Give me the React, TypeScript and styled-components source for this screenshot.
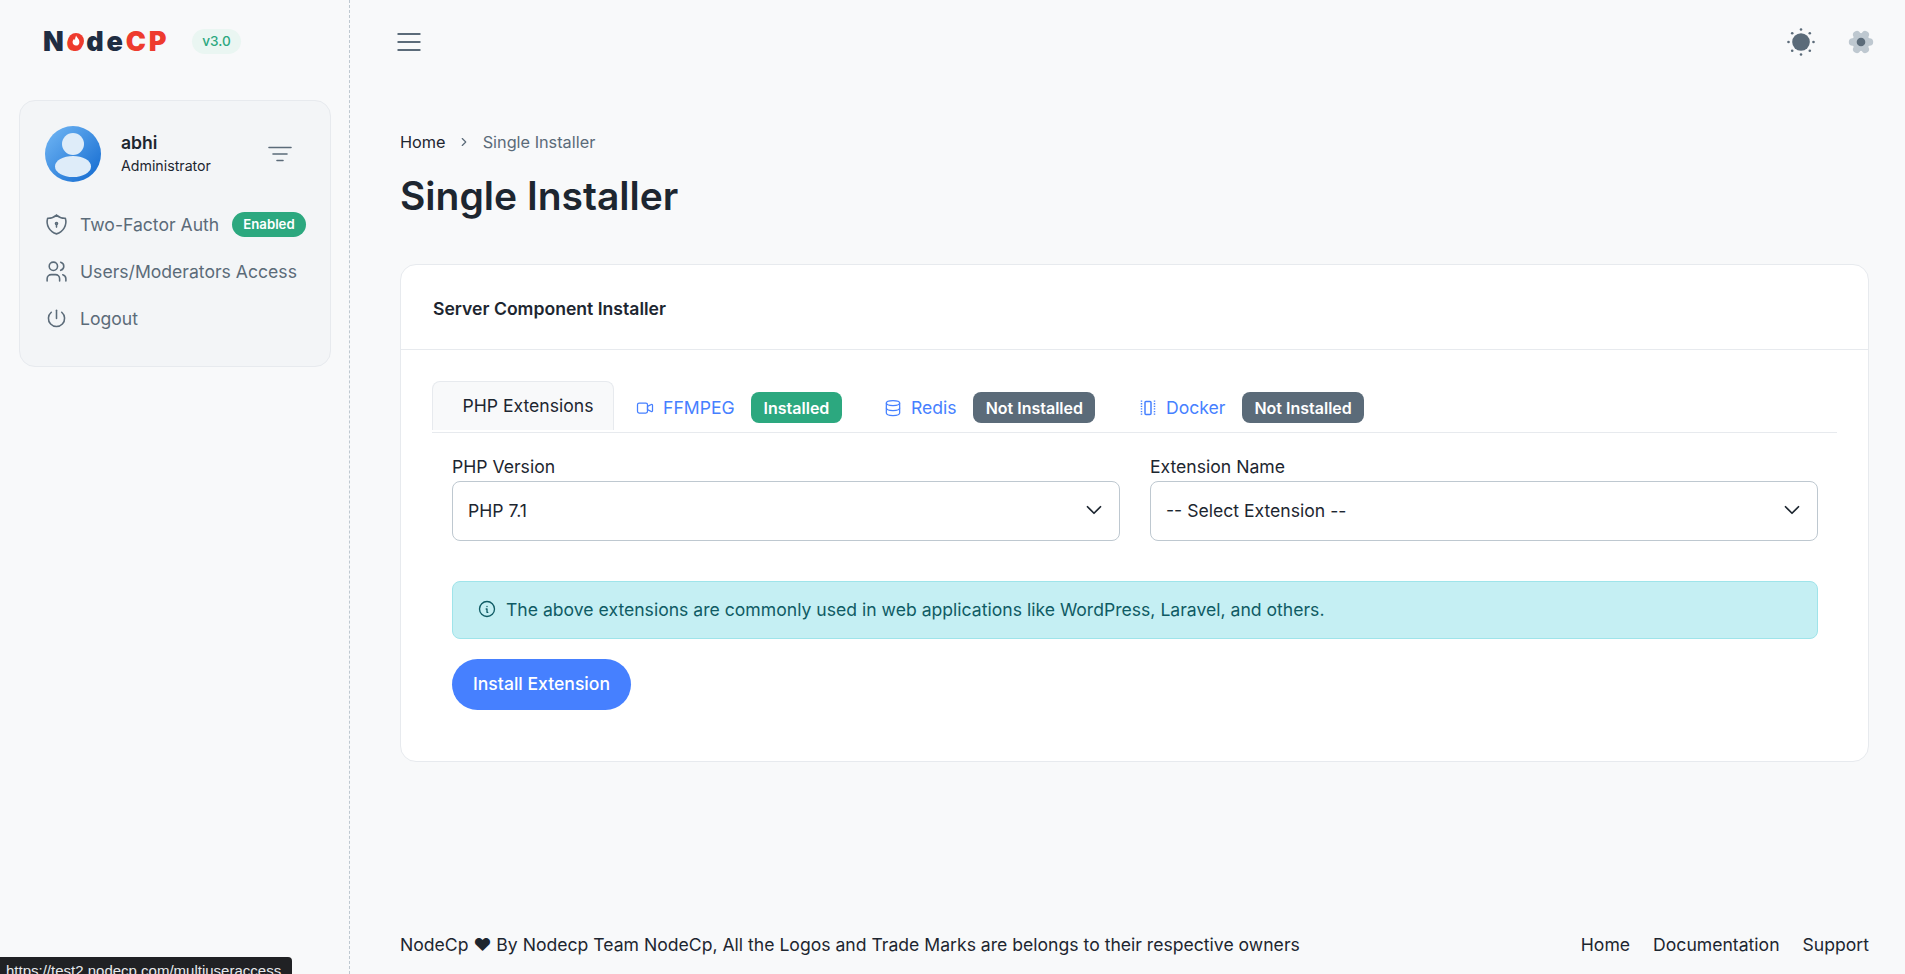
import React from "react";
import styled, { createGlobalStyle } from "styled-components";
import { TbChevronDown, TbChevronRight, TbDatabase, TbInfoCircle, TbMenu2, TbPower, TbShieldLock, TbUsers, TbVideo } from "react-icons/tb";

const GlobalStyle = createGlobalStyle`
  * { box-sizing: border-box; }
  html, body { margin: 0; height: 100%; }
  body {
    background: #f8f9fa;
    color: #1d2630;
    font-family: Inter, "Noto Sans", sans-serif;
    font-size: 17.6px;
    overflow: hidden;
  }
`;

const Layout = styled.div`
  display: flex;
  height: 974px;
`;
const Sidebar = styled.aside`
  width: 350px;
  flex: none;
  border-right: 1px dashed #bec8d0;
  padding: 0 18px 0 19px;
`;
const LogoRow = styled.div`
  display: flex;
  align-items: center;
  height: 83px;
  padding-left: 24px;
  gap: 23px;
`;
const Logo = styled.div`
  font-size: 27px;
  font-weight: 900;
  letter-spacing: 2.8px;
  color: #1f2d42;
  line-height: 1;
`;
const LogoRed = styled.span`
  color: #ee3b2e;
`;
const LogoO = styled.span`
  position: relative;
  color: #ee3b2e;
`;
const Flame = styled.svg`
  position: absolute;
  left: 1px;
  top: 8px;
  width: 16px;
  height: 16px;
`;
const Version = styled.span`
  background: #eaf6f2;
  color: #2ca87f;
  border-radius: 13px;
  font-size: 13.6px;
  font-weight: 500;
  line-height: 25px;
  padding: 0 10px;
`;
const UserCard = styled.div`
  margin-top: 17px;
  height: 267px;
  background: #f3f5f7;
  border: 1px solid #e7eaee;
  border-radius: 16px;
  padding: 25px 25px;
`;
const UserRow = styled.div`
  display: flex;
  align-items: center;
  margin-bottom: 19px;
`;
const Avatar = styled.svg`
  width: 56px;
  height: 56px;
  flex: none;
`;
const UserText = styled.div`
  margin-left: 20px;
  flex: 1;
`;
const UserName = styled.div`
  font-size: 17.6px;
  font-weight: 600;
  line-height: 24px;
`;
const UserRole = styled.div`
  font-size: 14.2px;
  line-height: 22px;
`;
const FilterGlyph = styled.svg`
  flex: none;
  margin-right: 13px;
`;
const MenuItem = styled.div`
  display: flex;
  align-items: center;
  height: 47px;
  color: #5b6b79;
  font-size: 17.6px;
  white-space: nowrap;
  svg {
    flex: none;
    margin: 0 11px 0 -1px;
    font-size: 25px;
    stroke-width: 1.5;
  }
`;
const SmallBadge = styled.span`
  margin-left: 13px;
  background: #2ca87f;
  color: #fff;
  font-size: 13.2px;
  font-weight: 600;
  line-height: 25px;
  padding: 0 11px;
  border-radius: 13px;
`;
const Main = styled.main`
  flex: 1;
  min-width: 0;
  display: flex;
  flex-direction: column;
  padding: 0 36px 0 50px;
`;
const Topbar = styled.header`
  display: flex;
  align-items: center;
  justify-content: space-between;
  height: 83px;
  color: #5b6b79;
  flex: none;
`;
const MenuButton = styled(TbMenu2)`
  margin-left: -7px;
  stroke-width: 1.6;
`;
const TopIcons = styled.div`
  display: flex;
  align-items: center;
  gap: 32px;
  margin-right: -6px;
`;
const Crumbs = styled.div`
  display: flex;
  align-items: center;
  margin-top: 47px;
  font-size: 16.3px;
  color: #1d2630;
  line-height: 24px;
  gap: 11.5px;
  svg { color: #5b6b79; }
`;
const CrumbActive = styled.span`
  color: #5b6b79;
`;
const Title = styled.h1`
  margin: 16px 0 0;
  font-size: 39px;
  line-height: 52px;
  font-weight: 600;
`;
const Card = styled.section`
  margin-top: 42px;
  background: #fff;
  border: 1px solid #e7eaee;
  border-radius: 16px;
  height: 498px;
`;
const CardHead = styled.div`
  height: 85px;
  display: flex;
  align-items: center;
  padding: 3px 32px 0;
  border-bottom: 1px solid #e7eaee;
  font-size: 17.6px;
  font-weight: 600;
`;
const CardBody = styled.div`
  padding: 31px;
`;
const Tabs = styled.div`
  display: flex;
  align-items: center;
  height: 52px;
  border-bottom: 1px solid #e7eaee;
`;
const ActiveTab = styled.div`
  width: 182px;
  height: 49px;
  margin-bottom: 3px;
  display: flex;
  align-items: center;
  justify-content: center;
  padding-left: 10px;
  background: #f8f9fa;
  border: 1px solid #e7eaee;
  border-bottom: 0;
  border-radius: 8px 8px 0 0;
  font-size: 17.6px;
`;
const Tab = styled.div<{ $width: number }>`
  width: ${(p) => p.$width}px;
  flex: none;
  display: flex;
  align-items: center;
  color: #4680ff;
  font-size: 17.6px;
  padding: 2px 0 0 21px;
  svg {
    flex: none;
    font-size: 20px;
    margin-right: 8px;
    stroke-width: 1.5;
  }
`;
const StatusBadge = styled.span<{ $on: boolean }>`
  margin-left: 16.5px;
  height: 31px;
  display: inline-flex;
  align-items: center;
  padding: 0 12.5px;
  border-radius: 8px;
  background: ${(p) => (p.$on ? "#2ca87f" : "#5b6b79")};
  color: #fff;
  font-size: 16px;
  font-weight: 600;
`;
const Form = styled.div`
  padding: 0 19px 0 20px;
`;
const FieldGrid = styled.div`
  display: grid;
  grid-template-columns: 1fr 1fr;
  gap: 30px;
  margin-top: 22px;
`;
const Label = styled.div`
  line-height: 24px;
  margin-bottom: 2px;
`;
const Select = styled.div`
  height: 60px;
  display: flex;
  align-items: center;
  justify-content: space-between;
  padding: 0 12px 2px 15px;
  background: #fff;
  border: 1px solid #bec8d0;
  border-radius: 8px;
  svg { stroke-width: 1.6; }
`;
const Alert = styled.div`
  margin-top: 40px;
  height: 58px;
  display: flex;
  align-items: center;
  gap: 9px;
  padding: 0 24px 2px;
  background: #c5eff3;
  border: 1px solid #9fe4ea;
  border-radius: 8px;
  color: #0f5b64;
  svg { flex: none; stroke-width: 1.6; }
`;
const Button = styled.button`
  display: block;
  margin-top: 20px;
  width: 179px;
  height: 51px;
  border: 0;
  border-radius: 26px;
  padding: 0 0 2px;
  background: #4680ff;
  color: #fff;
  font-family: inherit;
  font-size: 17.6px;
  font-weight: 500;
`;
const Footer = styled.footer`
  margin-top: auto;
  height: 41px;
  display: flex;
  justify-content: space-between;
  line-height: 24px;
`;
const FooterLinks = styled.div`
  display: flex;
  gap: 23px;
`;
const StatusTip = styled.div`
  position: fixed;
  left: 0;
  bottom: 0;
  width: 292px;
  height: 17px;
  overflow: hidden;
  padding: 0 6px;
  background: #202124;
  border-top-right-radius: 4px;
  color: #e8eaed;
  font-family: "Liberation Sans", sans-serif;
  font-size: 15px;
  line-height: 27px;
  white-space: nowrap;
`;

const FilterIcon = () => (
  <FilterGlyph width="24" height="24" viewBox="0 0 24 24" stroke="#5b6b79" strokeWidth="1.6" strokeLinecap="round">
    <path d="M1 5.5h22M5 12h14M9 18.5h6" />
  </FilterGlyph>
);
const SunIcon = () => (
  <svg width="28" height="28" viewBox="0 0 28 28" fill="#5b6b79">
    <circle cx="14" cy="14" r="8.8" />
    {[[14, 1.5], [14, 26.5], [1.5, 14], [26.5, 14], [5.2, 5.2], [22.8, 5.2], [5.2, 22.8], [22.8, 22.8]].map(([x, y]) => (
      <circle key={`${x}-${y}`} cx={x} cy={y} r="1.3" />
    ))}
  </svg>
);
const GearIcon = () => (
  <svg width="28" height="28" viewBox="0 0 28 28">
    <g fill="#bec8d0">
      <circle cx="14" cy="14" r="9" />
      {[30, 90, 150, 210, 270, 330].map((a) => (
        <circle key={a} cx="14" cy="5.6" r="3.8" transform={`rotate(${a} 14 14)`} />
      ))}
    </g>
    <circle cx="14" cy="14" r="4.3" fill="#5b6b79" />
  </svg>
);
const DockerIcon = () => (
  <svg width="20" height="20" viewBox="0 0 20 20" fill="none" stroke="#4680ff" strokeWidth="1.4">
    <rect x="7" y="3.5" width="6" height="13" rx="1" />
    <path d="M3.5 2.5v15M16.5 2.5v15" strokeDasharray="1.3 1.3" />
  </svg>
);

const App: React.FC = () => {
  return (
    <Layout>
      <GlobalStyle />
      <Sidebar>
        <LogoRow>
          <Logo>
            N
            <LogoO>
              o
              <Flame viewBox="0 0 16 16">
                <circle cx="8" cy="8" r="8" fill="#ee3b2e" />
                <path
                  fill="#fff"
                  d="M8.2 2.6c.2 1.800 3.200 3.100 3.200 6.300 0 2.200-1.500 3.700-3.400 3.700s-3.400-1.500-3.400-3.500c0-1.500.8-2.500 1.500-3.300.2.700.5 1.100.9 1.400 0-1.700.6-3.300 1.200-4.600z"
                />
              </Flame>
            </LogoO>
            de<LogoRed>CP</LogoRed>
          </Logo>
          <Version>v3.0</Version>
        </LogoRow>
        <UserCard>
          <UserRow>
            <Avatar viewBox="0 0 56 56">
              <defs>
                <linearGradient id="avatarFill" x1="0" y1="0" x2="1" y2="1">
                  <stop offset="0" stopColor="#73b8f5" />
                  <stop offset="1" stopColor="#1068cf" />
                </linearGradient>
              </defs>
              <circle cx="28" cy="28" r="28" fill="url(#avatarFill)" />
              <circle cx="28" cy="18" r="11" fill="#deecf9" />
              <ellipse cx="28" cy="40.5" rx="18" ry="10.5" fill="#deecf9" />
            </Avatar>
            <UserText>
              <UserName>abhi</UserName>
              <UserRole>Administrator</UserRole>
            </UserText>
            <FilterIcon />
          </UserRow>
          <MenuItem>
            <TbShieldLock />
            Two-Factor Auth
            <SmallBadge>Enabled</SmallBadge>
          </MenuItem>
          <MenuItem>
            <TbUsers />
            Users/Moderators Access
          </MenuItem>
          <MenuItem>
            <TbPower />
            Logout
          </MenuItem>
        </UserCard>
      </Sidebar>
      <Main>
        <Topbar>
          <MenuButton size={32} />
          <TopIcons>
            <SunIcon />
            <GearIcon />
          </TopIcons>
        </Topbar>
        <Crumbs>
          Home
          <TbChevronRight size={14} />
          <CrumbActive>Single Installer</CrumbActive>
        </Crumbs>
        <Title>Single Installer</Title>
        <Card>
          <CardHead>Server Component Installer</CardHead>
          <CardBody>
            <Tabs>
              <ActiveTab>PHP Extensions</ActiveTab>
              <Tab $width={248}>
                <TbVideo />
                FFMPEG
                <StatusBadge $on>Installed</StatusBadge>
              </Tab>
              <Tab $width={255}>
                <TbDatabase />
                Redis
                <StatusBadge $on={false}>Not Installed</StatusBadge>
              </Tab>
              <Tab $width={270}>
                <DockerIcon />
                Docker
                <StatusBadge $on={false}>Not Installed</StatusBadge>
              </Tab>
            </Tabs>
            <Form>
              <FieldGrid>
                <div>
                  <Label>PHP Version</Label>
                  <Select>
                    PHP 7.1
                    <TbChevronDown size={26} />
                  </Select>
                </div>
                <div>
                  <Label>Extension Name</Label>
                  <Select>
                    -- Select Extension --
                    <TbChevronDown size={26} />
                  </Select>
                </div>
              </FieldGrid>
              <Alert>
                <TbInfoCircle size={20} />
                The above extensions are commonly used in web applications like WordPress, Laravel, and others.
              </Alert>
              <Button>Install Extension</Button>
            </Form>
          </CardBody>
        </Card>
        <Footer>
          <span>NodeCp ❤ By Nodecp Team NodeCp, All the Logos and Trade Marks are belongs to their respective owners</span>
          <FooterLinks>
            <span>Home</span>
            <span>Documentation</span>
            <span>Support</span>
          </FooterLinks>
        </Footer>
      </Main>
      <StatusTip>https://test2.nodecp.com/multiuseraccess</StatusTip>
    </Layout>
  );
};

export default App;
